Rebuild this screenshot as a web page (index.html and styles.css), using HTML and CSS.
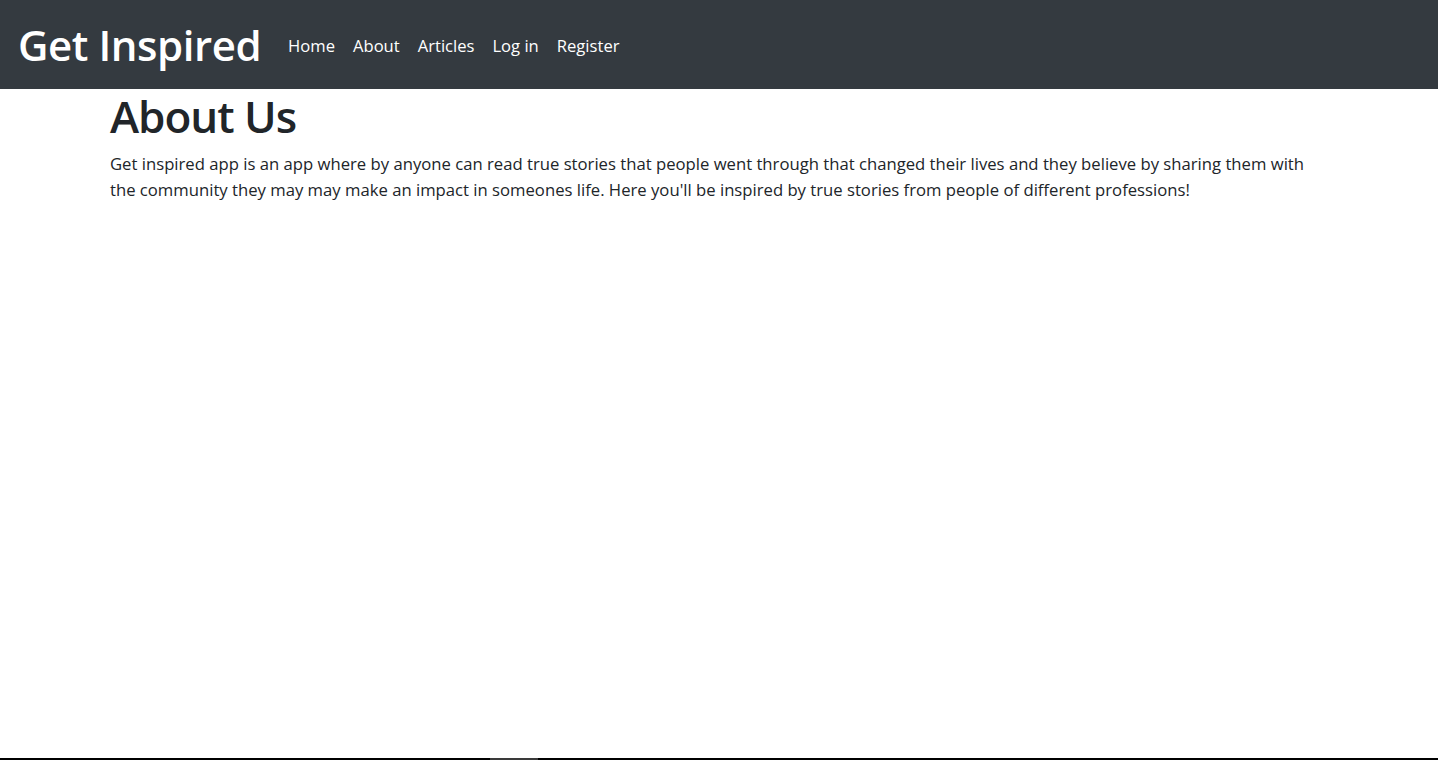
FILE: index.html
```html
<!DOCTYPE html>
<html lang="en">
<head>
<meta charset="utf-8">
<title>Get Inspired</title>
<link rel="stylesheet" href="styles.css">
</head>
<body>
<div class="page">
  <nav class="navbar">
    <a class="brand" href="#">Get Inspired</a>
    <ul class="nav">
      <li><a href="#">Home</a></li>
      <li><a href="#">About</a></li>
      <li><a href="#">Articles</a></li>
      <li><a href="#">Log in</a></li>
      <li><a href="#">Register</a></li>
    </ul>
  </nav>
  <main class="container">
    <h1 class="title">About Us</h1>
    <p class="lead">Get inspired app is an app where by anyone can read true stories that people went through that changed their lives and they believe by sharing them with the community they may may make an impact in someones life. Here you'll be inspired by true stories from people of different professions!</p>
  </main>
  <div class="bottom-edge"><span class="edge-mark"></span></div>
</div>
</body>
</html>
```
FILE: styles.css
```css
* { box-sizing: border-box; }
html, body { margin: 0; padding: 0; }
body {
  font-family: "Open Sans", "Noto Sans", sans-serif;
  color: #212529;
  background: #fff;
}
.page {
  display: flex;
  flex-direction: column;
  height: 100vh;
}
.navbar {
  background: #343a40;
  height: 89px;
  display: flex;
  align-items: center;
  padding: 0 0 0 18px;
  flex: none;
}
.brand {
  color: #fff;
  text-decoration: none;
  font-size: 42px;
  font-weight: 600;
  letter-spacing: -0.45px;
  line-height: 1;
  margin-right: 18px;
}
.nav {
  list-style: none;
  display: flex;
  margin: 0;
  padding: 0;
  padding-top: 2px;
}
.nav a {
  display: block;
  color: #fff;
  text-decoration: none;
  font-size: 16.6px;
  padding: 0 9px;
}
.container {
  flex: 1;
  padding: 0 110px;
}
.title {
  margin: 0;
  font-size: 44px;
  font-weight: 600;
  letter-spacing: -1px;
  line-height: 54px;
}
.lead {
  margin: 8px 0 0;
  font-size: 16.68px;
  line-height: 26px;
  max-width: 1220px;
}
.bottom-edge {
  flex: none;
  height: 2px;
  background: #000;
  position: relative;
}
.edge-mark {
  position: absolute;
  left: 490px;
  top: 0;
  width: 48px;
  height: 2px;
  background: #3a3a3a;
}
```
